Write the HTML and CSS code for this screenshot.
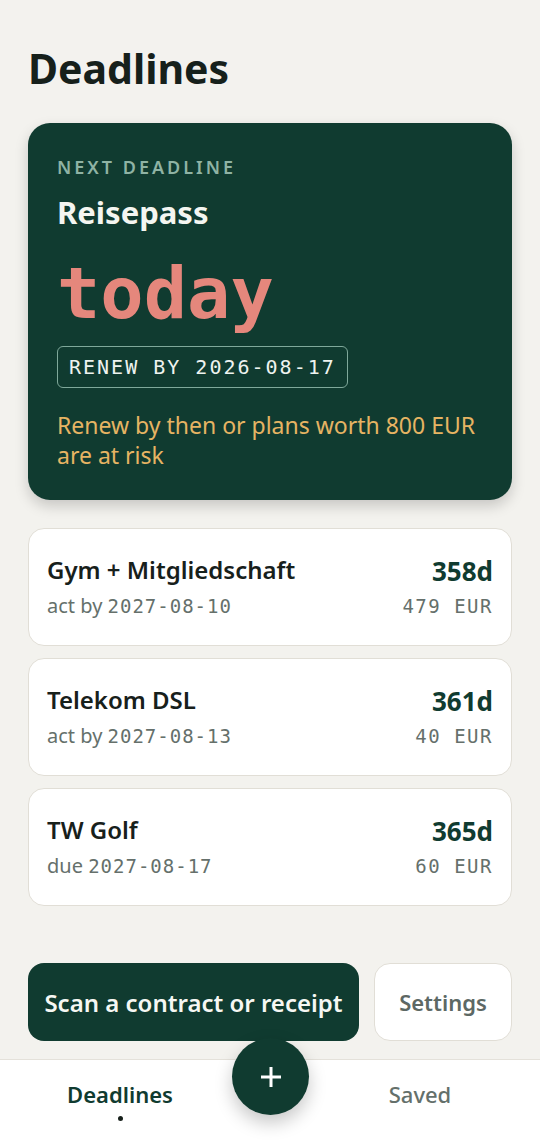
FILE: index.html
```html
<!DOCTYPE html>
<html lang="en">
<head>
  <meta charset="UTF-8">
  <meta name="viewport" content="width=device-width, initial-scale=1.0">
  <title>Deadlines</title>
  <link rel="stylesheet" href="styles.css">
</head>
<body>
  <div class="app">
    <main class="page">
      <h1>Deadlines</h1>

      <section class="hero">
        <div class="hero-label">NEXT DEADLINE</div>
        <div class="hero-name">Reisepass</div>
        <div class="hero-when">today</div>
        <div class="hero-badge">RENEW BY 2026-08-17</div>
        <p class="hero-risk">Renew by then or plans worth 800 EUR are at risk</p>
      </section>

      <div class="list">
        <div class="item">
          <div class="item-main">
            <div class="item-name">Gym + Mitgliedschaft</div>
            <div class="item-sub">act by <span class="mono">2027-08-10</span></div>
          </div>
          <div class="item-side">
            <div class="item-days">358d</div>
            <div class="item-amount">479 EUR</div>
          </div>
        </div>
        <div class="item">
          <div class="item-main">
            <div class="item-name">Telekom DSL</div>
            <div class="item-sub">act by <span class="mono">2027-08-13</span></div>
          </div>
          <div class="item-side">
            <div class="item-days">361d</div>
            <div class="item-amount">40 EUR</div>
          </div>
        </div>
        <div class="item">
          <div class="item-main">
            <div class="item-name">TW Golf</div>
            <div class="item-sub">due <span class="mono">2027-08-17</span></div>
          </div>
          <div class="item-side">
            <div class="item-days">365d</div>
            <div class="item-amount">60 EUR</div>
          </div>
        </div>
      </div>

      <div class="actions">
        <button class="btn btn-primary">Scan a contract or receipt</button>
        <button class="btn btn-ghost">Settings</button>
      </div>
    </main>

    <nav class="tabbar">
      <div class="tab active">Deadlines</div>
      <div class="tab-gap"></div>
      <div class="tab">Saved</div>
      <button class="fab" aria-label="Add">
        <svg width="24" height="24" viewBox="0 0 24 24">
          <path d="M12 2v20M2 12h20" stroke="#fff" stroke-width="3" fill="none"/>
        </svg>
      </button>
    </nav>
  </div>
</body>
</html>
```

FILE: styles.css
```css
body {
  margin: 0;
  padding: 0;
  background: #f3f2ee;
  font-family: "Noto Sans", Arial, sans-serif;
  color: #17201b;
}

.app {
  min-height: 100vh;
  display: flex;
  flex-direction: column;
}

.page {
  flex: 1;
  padding: 40px 28px 18px;
  display: flex;
  flex-direction: column;
}

h1 {
  margin: 0 0 27px;
  font-size: 41px;
  line-height: 56px;
  font-weight: 700;
  color: #16201b;
}

.mono {
  font-family: "DejaVu Sans Mono", "Liberation Mono", monospace;
}

/* next deadline card */
.hero {
  background: #103b30;
  border-radius: 22px;
  padding: 30px 29px 30px;
  box-shadow: 0 6px 14px rgba(0, 0, 0, 0.18);
}

.hero-label {
  font-size: 18px;
  font-weight: 600;
  letter-spacing: 3px;
  color: #8fb3a4;
  line-height: 28px;
}

.hero-name {
  margin-top: 12px;
  font-size: 31px;
  font-weight: 700;
  color: #f4f6f1;
  line-height: 38px;
}

.hero-when {
  margin-top: 19px;
  font-family: "DejaVu Sans Mono", "Liberation Mono", monospace;
  font-size: 72px;
  font-weight: 700;
  color: #e5877c;
  line-height: 86px;
}

.hero-badge {
  width: fit-content;
  margin-top: 10px;
  padding: 8px 11px;
  border: 1.5px solid #7fa89a;
  border-radius: 6px;
  font-family: "DejaVu Sans Mono", "Liberation Mono", monospace;
  font-size: 20px;
  letter-spacing: 2px;
  line-height: 24px;
  color: #eef3ef;
}

.hero-risk {
  margin: 22px 0 0;
  font-size: 23px;
  line-height: 30px;
  color: #e6b463;
}

/* upcoming list */
.list {
  margin-top: 28px;
  display: flex;
  flex-direction: column;
  gap: 12px;
}

.item {
  background: #fff;
  border: 1px solid #e1ded6;
  border-radius: 16px;
  padding: 0 18px;
  height: 116px;
  display: flex;
  align-items: center;
  justify-content: space-between;
}

.item-name {
  font-size: 24px;
  font-weight: 600;
  line-height: 30px;
  color: #17201b;
}

.item-sub {
  margin-top: 8px;
  font-size: 20px;
  color: #65706b;
  line-height: 26px;
}

.item-sub .mono {
  font-size: 19px;
  letter-spacing: 1px;
}

.item-side {
  text-align: right;
}

.item-days {
  font-size: 26px;
  font-weight: 700;
  color: #103b30;
  line-height: 32px;
}

.item-amount {
  margin-top: 6px;
  font-family: "DejaVu Sans Mono", "Liberation Mono", monospace;
  font-size: 19px;
  letter-spacing: 1.5px;
  color: #65706b;
  line-height: 26px;
}

/* bottom buttons */
.actions {
  margin-top: auto;
  display: flex;
  gap: 15px;
}

.btn {
  height: 78px;
  border-radius: 16px;
  font-family: inherit;
  font-weight: 600;
  cursor: pointer;
}

.btn-primary {
  flex: 1;
  background: #103b30;
  color: #f6f7f3;
  border: none;
  font-size: 24px;
}

.btn-ghost {
  width: 138px;
  background: #fff;
  color: #5d6864;
  border: 1.5px solid #e1ded6;
  font-size: 22px;
}

/* tab bar */
.tabbar {
  position: relative;
  height: 84px;
  background: #fff;
  border-top: 1.5px solid #e4e1da;
  display: flex;
  padding: 0 10px;
}

.tab {
  width: 220px;
  text-align: center;
  padding-top: 19px;
  font-size: 22px;
  font-weight: 500;
  color: #64706b;
  line-height: 30px;
}

.tab.active {
  color: #103b30;
  font-weight: 600;
}

.tab.active::after {
  content: "";
  display: block;
  width: 5px;
  height: 5px;
  border-radius: 50%;
  background: #17201b;
  margin: 7px auto 0;
}

.tab-gap {
  flex: 1;
}

.fab {
  position: absolute;
  left: 50%;
  top: -22px;
  margin-left: -38px;
  width: 77px;
  height: 77px;
  border-radius: 50%;
  border: none;
  background: #103b30;
  display: flex;
  align-items: center;
  justify-content: center;
  box-shadow: 0 8px 18px rgba(0, 0, 0, 0.22);
  cursor: pointer;
}
```
